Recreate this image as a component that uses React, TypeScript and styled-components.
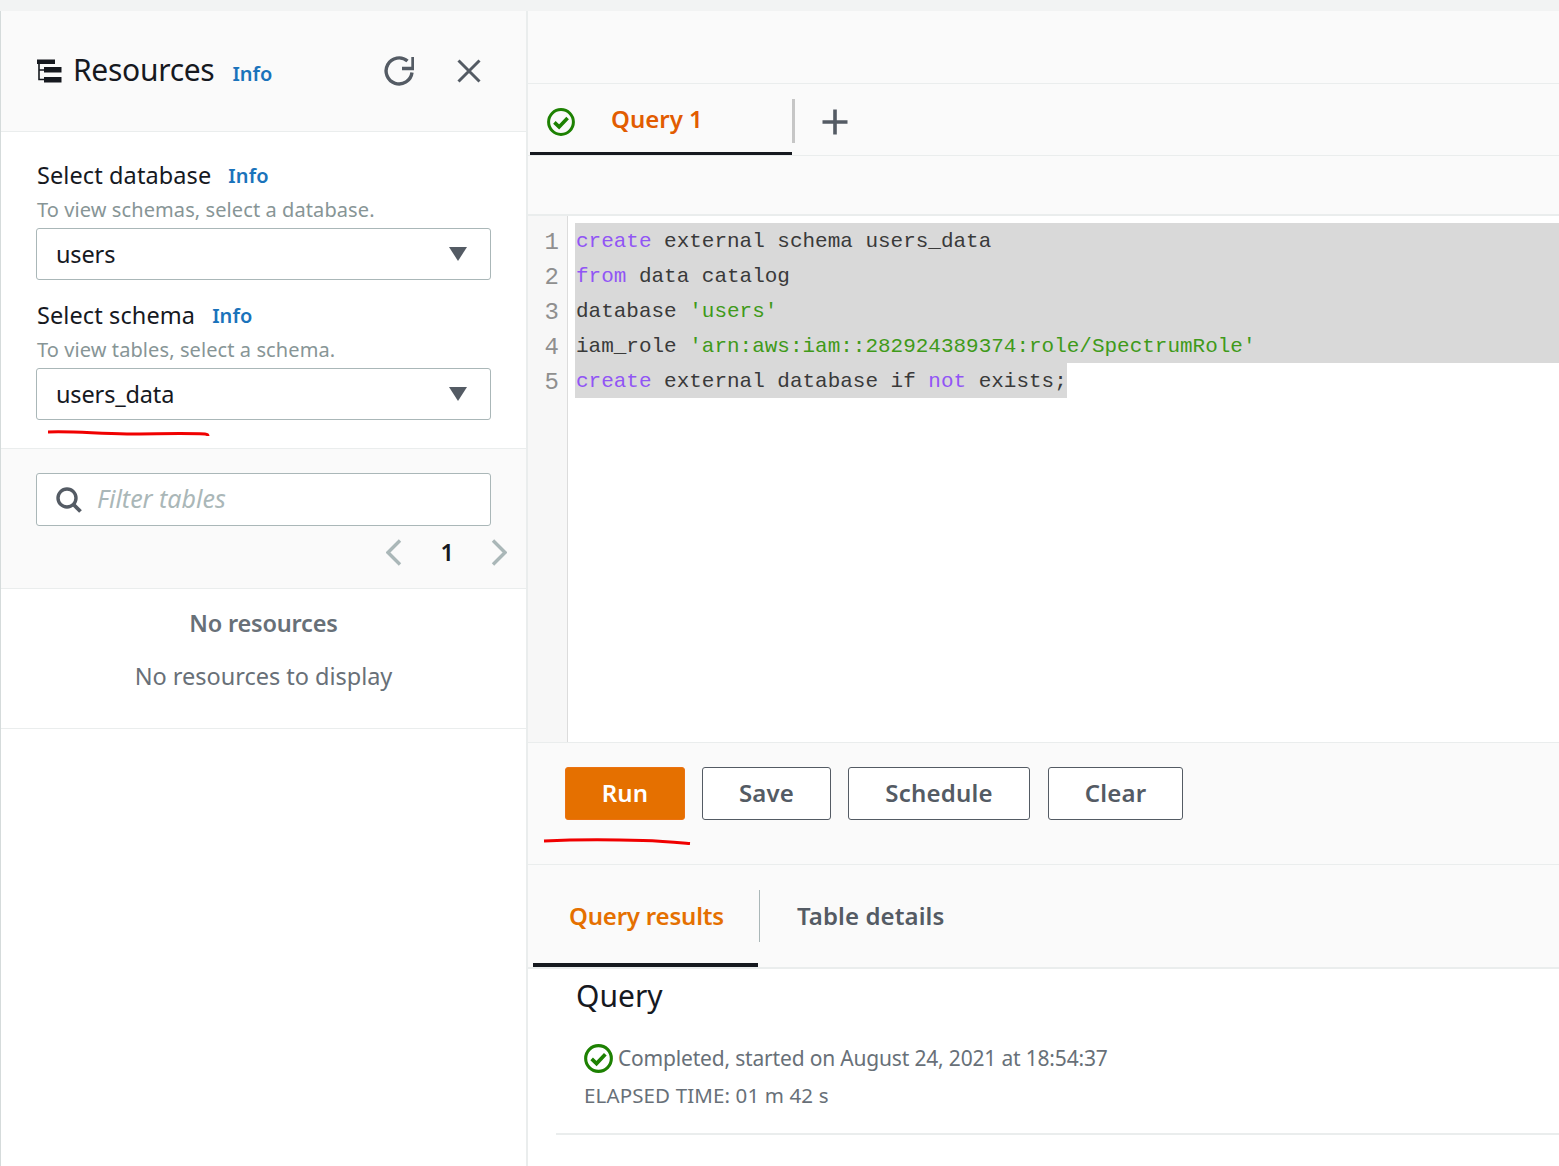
import styled, { createGlobalStyle } from "styled-components";

const GlobalStyle = createGlobalStyle`
    html, body {
        margin: 0;
        padding: 0;
        background: #fff;
    }
    * {
        box-sizing: border-box;
    }
`;

const FONT = `"Noto Sans", "Liberation Sans", sans-serif`;
const MONO = `"Liberation Mono", monospace`;
const GREY_BG = "#fafafa";
const LINE = "#eaeded";

const Page = styled.div`
    width: 1559px;
    height: 1166px;
    overflow: hidden;
    font-family: ${FONT};
    color: #16191f;
    background: #fff;
    border-top: 11px solid #f2f3f3;
    display: grid;
    grid-template-columns: 528px 1fr;
`;

const Side = styled.aside`
    height: 1155px;
    position: relative;
    border-left: 1px solid #d5dbdb;
    border-right: 2px solid ${LINE};
`;

const SideHeader = styled.header`
    height: 121px;
    background: ${GREY_BG};
    border-bottom: 1px solid ${LINE};
    display: flex;
    align-items: center;
    padding: 0 45px 0 35px;
`;

const SideTitle = styled.h2`
    margin: 0 0 2px 11px;
    font-size: 30px;
    font-weight: 400;
    letter-spacing: -0.3px;
    line-height: 40px;
`;

const InfoLink = styled.span<{ $left: number }>`
    margin-left: ${(p) => p.$left}px;
    color: #1a73bb;
    font-size: 20px;
    font-weight: 600;
`;

const HeaderInfo = styled(InfoLink)`
    margin-top: 4px;
`;

const HeaderActions = styled.div`
    margin-left: auto;
    display: flex;
    align-items: center;
    gap: 43px;
`;

const Fields = styled.section`
    height: 317px;
    padding: 27px 35px 0 35px;
    border-bottom: 1px solid ${LINE};
`;

const Field = styled.div`
    margin-bottom: 19px;
`;

const FieldLabel = styled.div`
    display: flex;
    align-items: center;
    height: 33px;
    padding: 0 0 1px 1px;
    font-size: 23.5px;
    letter-spacing: 0.1px;
`;

const FieldHint = styled.div`
    height: 36px;
    line-height: 36px;
    padding-left: 1px;
    font-size: 20px;
    letter-spacing: 0.09px;
    color: #879596;
`;

const SelectBox = styled.div`
    height: 52px;
    border: 1px solid #aab7b8;
    border-radius: 3px;
    background: #fff;
    padding: 0 22px 0 19px;
    display: flex;
    align-items: center;
    justify-content: space-between;
    font-size: 23.5px;
    letter-spacing: -0.15px;
`;

const FilterArea = styled.section`
    height: 140px;
    background: ${GREY_BG};
    border-bottom: 1px solid ${LINE};
    padding: 24px 35px 0 35px;
`;

const FilterBox = styled.div`
    height: 53px;
    border: 1px solid #aab7b8;
    border-radius: 3px;
    background: #fff;
    display: flex;
    align-items: center;
    gap: 15px;
    padding: 0 0 0 19px;
`;

const FilterText = styled.span`
    margin-bottom: 4px;
    font-size: 25px;
    font-style: italic;
    letter-spacing: 0;
    color: #aab7b8;
`;

const Pager = styled.div`
    height: 52px;
    margin-right: -16px;
    display: flex;
    align-items: center;
    justify-content: flex-end;
    gap: 37px;
    font-size: 23.5px;
    font-weight: 600;
`;

const PagerNumber = styled.span`
    margin-left: 2px;
`;

const EmptyState = styled.section`
    height: 140px;
    border-bottom: 1px solid ${LINE};
    text-align: center;
    padding-top: 17px;
`;

const EmptyTitle = styled.div`
    font-size: 23.5px;
    line-height: 34px;
    font-weight: 600;
    letter-spacing: -0.2px;
    color: #687078;
`;

const EmptyText = styled.div`
    margin-top: 19px;
    font-size: 23.5px;
    line-height: 34px;
    letter-spacing: -0.02px;
    color: #687078;
`;

const Main = styled.main`
    height: 1155px;
    display: flex;
    flex-direction: column;
`;

const TopBand = styled.div`
    height: 73px;
    flex: none;
    background: ${GREY_BG};
    border-bottom: 1px solid ${LINE};
`;

const QueryTabs = styled.div`
    height: 72px;
    flex: none;
    background: ${GREY_BG};
    border-bottom: 1px solid ${LINE};
    display: flex;
    padding-left: 2px;
`;

const QueryTab = styled.div`
    width: 262px;
    height: 71px;
    border-bottom: 3px solid #16191f;
    display: flex;
    align-items: center;
    padding: 7px 0 0 17px;
    gap: 36px;
`;

const QueryTabName = styled.span`
    margin-bottom: 6px;
    font-size: 24px;
    font-weight: 600;
    letter-spacing: 0;
    color: #e25c00;
`;

const TabDivider = styled.div`
    width: 3px;
    height: 44px;
    margin-top: 15px;
    background: #c6c6c6;
`;

const AddTab = styled.div`
    margin: 25px 0 0 27px;
`;

const SubBand = styled.div`
    height: 60px;
    flex: none;
    background: ${GREY_BG};
    border-bottom: 2px solid ${LINE};
`;

const Editor = styled.div`
    height: 527px;
    flex: none;
    display: flex;
    border-bottom: 1px solid ${LINE};
`;

const Gutter = styled.div`
    width: 40px;
    flex: none;
    background: #f7f7f7;
    border-right: 1px solid #dcdcdc;
    padding: 9px 8px 0 0;
    text-align: right;
    font-family: ${MONO};
    font-size: 24px;
    line-height: 35px;
    color: #8f8f8f;
`;

const Code = styled.div`
    flex: 1;
    padding: 7px 0 0 7px;
    font-family: ${MONO};
    font-size: 20.97px;
    line-height: 37px;
    color: #3a3a3a;
`;

const CodeLine = styled.div<{ $fit?: boolean }>`
    height: 35px;
    background: #d9d9d9;
    white-space: pre;
    width: ${(p) => (p.$fit ? "492px" : "auto")};
    padding-left: 1px;
`;

const Keyword = styled.span`
    color: #9155f5;
`;

const Literal = styled.span`
    color: #3f9a1a;
`;

const ActionBar = styled.div`
    height: 122px;
    flex: none;
    background: ${GREY_BG};
    border-bottom: 1px solid ${LINE};
    padding: 24px 0 0 37px;
    display: flex;
    align-items: flex-start;
    gap: 17px;
    position: relative;
`;

const ActionButton = styled.button<{ $primary?: boolean; $width: number; $lead?: number }>`
    width: ${(p) => p.$width}px;
    height: 53px;
    margin-left: ${(p) => p.$lead ?? 0}px;
    padding: 0 0 2px;
    border-radius: 3px;
    border: 1px solid ${(p) => (p.$primary ? "#ec7211" : "#545b64")};
    background: ${(p) => (p.$primary ? "#e57000" : "#fff")};
    color: ${(p) => (p.$primary ? "#fff" : "#545b64")};
    font-family: ${FONT};
    font-size: 24px;
    font-weight: 600;
    letter-spacing: 0.2px;
`;

const ResultTabs = styled.div`
    height: 104px;
    flex: none;
    background: ${GREY_BG};
    border-bottom: 2px solid ${LINE};
    display: flex;
    padding-left: 5px;
`;

const ResultTab = styled.div<{ $active?: boolean; $width: number }>`
    width: ${(p) => p.$width}px;
    height: 102px;
    border-bottom: 4px solid ${(p) => (p.$active ? "#16191f" : "transparent")};
    color: ${(p) => (p.$active ? "#e57000" : "#545b64")};
    font-size: 24px;
    font-weight: 600;
    letter-spacing: ${(p) => (p.$active ? "-0.2px" : "0.1px")};
    padding: 34px 0 0 ${(p) => (p.$active ? 36 : 37)}px;
`;

const ResultDivider = styled.div`
    width: 1px;
    height: 52px;
    margin: 25px 0 0 1px;
    background: #aab7b8;
`;

const Results = styled.section`
    padding: 7px 0 0 48px;
`;

const ResultsTitle = styled.h3`
    margin: 0;
    font-size: 30px;
    font-weight: 400;
    line-height: 40px;
    letter-spacing: 0;
`;

const StatusLine = styled.div`
    margin: 25px 0 0 8px;
    height: 34px;
    display: flex;
    align-items: center;
    gap: 5px;
    font-size: 21px;
    letter-spacing: -0.18px;
    color: #687078;
`;

const ElapsedLine = styled.div`
    margin: 4px 0 0 8px;
    font-size: 20.5px;
    line-height: 32px;
    letter-spacing: 0.13px;
    color: #687078;
`;

const ResultsRule = styled.div`
    height: 2px;
    margin: 22px 0 0 -20px;
    background: ${LINE};
`;

const Scribble = styled.svg<{ $left: number; $top: number }>`
    position: absolute;
    left: ${(p) => p.$left}px;
    top: ${(p) => p.$top}px;
    overflow: visible;
`;

const CheckIcon = ({ size }: { size: number }) => (
    <svg width={size} height={size} viewBox="0 0 28 28" fill="none">
        <circle cx="14" cy="14" r="12.4" stroke="#1d8102" strokeWidth="3" />
        <path d="M7.4 14.400l4.700 4.500 8.500-9" stroke="#1d8102" strokeWidth="3.6" />
    </svg>
);

const ResourcesIcon = () => (
    <svg width="26" height="26" viewBox="0 0 26 26">
        <path d="M1 1.500h18V6H1zM8 9h17.500v5.500H8zM8 19h17.500v5.500H8z" fill="#16191f" />
        <path d="M3 4v17.500h5M3 12h5" stroke="#16191f" strokeWidth="1.600" fill="none" />
    </svg>
);

const RefreshIcon = () => (
    <svg width="30" height="30" viewBox="0 0 30 30" fill="none">
        <path d="M23.500 5A13 13 0 1 0 28 16.500" stroke="#545b64" strokeWidth="3.400" />
        <path d="M18 12.500h11V1" stroke="#545b64" strokeWidth="3.400" />
    </svg>
);

const CloseIcon = () => (
    <svg width="24" height="24" viewBox="0 0 24 24" fill="none">
        <path d="M1.500 1.500l21 21M22.500 1.500l-21 21" stroke="#545b64" strokeWidth="3" />
    </svg>
);

const CaretIcon = () => (
    <svg width="20" height="14" viewBox="0 0 20 14">
        <path d="M1 0h18l-9 14z" fill="#545b64" />
    </svg>
);

const SearchIcon = () => (
    <svg width="26" height="26" viewBox="0 0 26 26" fill="none">
        <circle cx="11" cy="11" r="9" stroke="#545b64" strokeWidth="3.400" />
        <path d="M17.500 17.500l7 7" stroke="#545b64" strokeWidth="3.800" />
    </svg>
);

const AngleIcon = ({ flip }: { flip?: boolean }) => (
    <svg width="16" height="27" viewBox="0 0 16 27" fill="none">
        <path d={flip ? "M2 1.500l12 12-12 12" : "M14 1.500l-12 12 12 12"} stroke="#aab7b8" strokeWidth="3.400" />
    </svg>
);

const PlusIcon = () => (
    <svg width="26" height="26" viewBox="0 0 26 26" fill="none">
        <path d="M13 0.500v25M0.500 13h25" stroke="#545b64" strokeWidth="3.600" />
    </svg>
);

function App() {
    return (
        <Page>
            <GlobalStyle />
            <Side>
                <SideHeader>
                    <ResourcesIcon />
                    <SideTitle>Resources</SideTitle>
                    <HeaderInfo $left={18}>Info</HeaderInfo>
                    <HeaderActions>
                        <RefreshIcon />
                        <CloseIcon />
                    </HeaderActions>
                </SideHeader>
                <Fields>
                    <Field>
                        <FieldLabel>
                            Select database
                            <InfoLink $left={17}>Info</InfoLink>
                        </FieldLabel>
                        <FieldHint>To view schemas, select a database.</FieldHint>
                        <SelectBox>
                            users
                            <CaretIcon />
                        </SelectBox>
                    </Field>
                    <Field>
                        <FieldLabel>
                            Select schema
                            <InfoLink $left={17}>Info</InfoLink>
                        </FieldLabel>
                        <FieldHint>To view tables, select a schema.</FieldHint>
                        <SelectBox>
                            users_data
                            <CaretIcon />
                        </SelectBox>
                    </Field>
                </Fields>
                <Scribble $left={46} $top={418} width="162" height="10" viewBox="0 0 162 10" fill="none">
                    <path d="M1 3C30 2 50 5 80 5s55-1 78 0c2 .2 3 1 3 2" stroke="#f00000" strokeWidth="3" />
                </Scribble>
                <FilterArea>
                    <FilterBox>
                        <SearchIcon />
                        <FilterText>Filter tables</FilterText>
                    </FilterBox>
                    <Pager>
                        <AngleIcon />
                        <PagerNumber>1</PagerNumber>
                        <AngleIcon flip />
                    </Pager>
                </FilterArea>
                <EmptyState>
                    <EmptyTitle>No resources</EmptyTitle>
                    <EmptyText>No resources to display</EmptyText>
                </EmptyState>
            </Side>
            <Main>
                <TopBand />
                <QueryTabs>
                    <QueryTab>
                        <CheckIcon size={28} />
                        <QueryTabName>Query 1</QueryTabName>
                    </QueryTab>
                    <TabDivider />
                    <AddTab>
                        <PlusIcon />
                    </AddTab>
                </QueryTabs>
                <SubBand />
                <Editor>
                    <Gutter>
                        <div>1</div>
                        <div>2</div>
                        <div>3</div>
                        <div>4</div>
                        <div>5</div>
                    </Gutter>
                    <Code>
                        <CodeLine>
                            <Keyword>create</Keyword> external schema users_data
                        </CodeLine>
                        <CodeLine>
                            <Keyword>from</Keyword> data catalog
                        </CodeLine>
                        <CodeLine>
                            database <Literal>'users'</Literal>
                        </CodeLine>
                        <CodeLine>
                            iam_role <Literal>'arn:aws:iam::282924389374:role/SpectrumRole'</Literal>
                        </CodeLine>
                        <CodeLine $fit>
                            <Keyword>create</Keyword> external database if <Keyword>not</Keyword> exists;
                        </CodeLine>
                    </Code>
                </Editor>
                <ActionBar>
                    <ActionButton $primary $width={120}>Run</ActionButton>
                    <ActionButton $width={129}>Save</ActionButton>
                    <ActionButton $width={182}>Schedule</ActionButton>
                    <ActionButton $width={135} $lead={1}>Clear</ActionButton>
                    <Scribble $left={15} $top={94} width="148" height="8" viewBox="0 0 148 8" fill="none">
                        <path d="M1 4C30 2.500 70 2.500 100 3.500c20 .6 35 2 47 3" stroke="#f00000" strokeWidth="3" />
                    </Scribble>
                </ActionBar>
                <ResultTabs>
                    <ResultTab $active $width={225}>Query results</ResultTab>
                    <ResultDivider />
                    <ResultTab $width={300}>Table details</ResultTab>
                </ResultTabs>
                <Results>
                    <ResultsTitle>Query</ResultsTitle>
                    <StatusLine>
                        <CheckIcon size={29} />
                        Completed, started on August 24, 2021 at 18:54:37
                    </StatusLine>
                    <ElapsedLine>ELAPSED TIME: 01 m 42 s</ElapsedLine>
                    <ResultsRule />
                </Results>
            </Main>
        </Page>
    );
}

export default App;
